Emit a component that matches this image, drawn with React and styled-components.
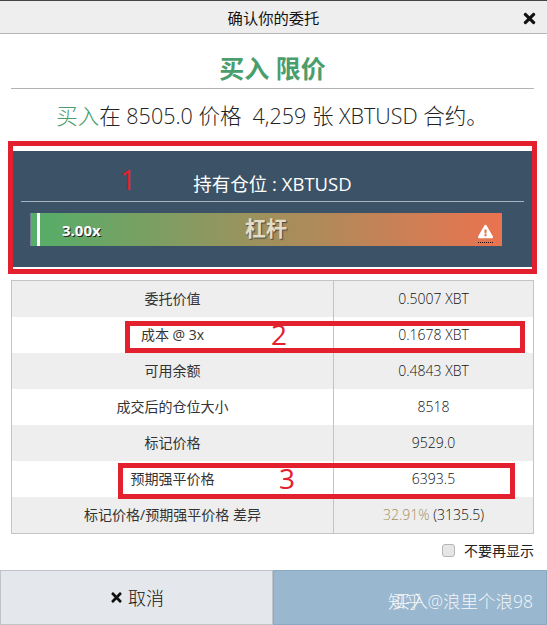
import React from "react";
import styled, { createGlobalStyle } from "styled-components";
import { FaTimes, FaExclamationTriangle } from "react-icons/fa";

const FONT = `"Open Sans", "Noto Sans CJK SC", sans-serif`;

const Global = createGlobalStyle`
  html, body { margin: 0; padding: 0; background: #fff; }
  body { font-family: ${FONT}; color: #333; }
  * { box-sizing: border-box; }
`;

const Modal = styled.div`
  position: relative;
  width: 547px;
  height: 625px;
  overflow: hidden;
  background: #fff;
  display: flex;
  flex-direction: column;
  border-top: 1px solid #444;
`;
const Header = styled.header`
  height: 33px;
  flex: none;
  background: #eee;
  border-bottom: 1px solid #b5b5b5;
  display: flex;
  align-items: center;
  justify-content: center;
  position: relative;
  font-size: 15.3px;
  color: #111;
`;
const Close = styled.span`
  position: absolute;
  right: 9px;
  top: 9px;
  line-height: 0;
  color: #111;
  font-size: 17px;
`;
const Body = styled.main`
  flex: 1;
  padding: 0 13px 0 11px;
  display: flex;
  flex-direction: column;
`;
const Title = styled.h1`
  margin: 0;
  height: 55px;
  display: flex;
  align-items: flex-end;
  justify-content: center;
  padding-bottom: 3px;
  font-size: 25px;
  font-weight: 700;
  line-height: 34px;
  color: #4a9d6c;
  border-bottom: 1px solid #b3b3b3;
`;
const Summary = styled.p`
  margin: 0;
  height: 51px;
  padding: 11px 1px 0 0;
  text-align: center;
  font-size: 21.5px;
  line-height: 32px;
  font-weight: 300;
  color: #222;
  white-space: pre;
`;
const Buy = styled.span`
  color: #4a9d6c;
`;
const Panel = styled.section`
  margin: 11px 2px 0;
  height: 116px;
  background: #3c5266;
  padding: 0 8px;
`;
const PanelTitle = styled.div`
  height: 51px;
  border-bottom: 1px solid #a3b3c2;
  display: flex;
  align-items: flex-end;
  justify-content: center;
  padding-bottom: 4px;
  color: #fff;
  font-size: 18.5px;
  line-height: 26px;
`;
const Gauge = styled.div`
  position: relative;
  margin: 11px 22px 0 9px;
  height: 33px;
  background: linear-gradient(to right, #55ae69, #ea7350);
  border-left: 1px solid #708090;
  display: flex;
  align-items: center;
`;
const Marker = styled.span`
  margin-left: 6px;
  width: 3px;
  height: 33px;
  background: #fff;
  flex: none;
`;
const Value = styled.span`
  margin-left: 22px;
  font-size: 15px;
  font-weight: 700;
  color: #fff;
  text-shadow: 1px 1px 0 #222;
`;
const GaugeLabel = styled.span`
  position: absolute;
  left: 214px;
  top: 0;
  line-height: 30px;
  font-size: 21px;
  font-weight: 700;
  color: #e4dcc4;
  text-shadow: 1px 1px 1px #444;
`;
const Warning = styled.span`
  position: absolute;
  right: 9px;
  top: 11px;
  color: #fff;
  font-size: 15px;
  line-height: 0;
  padding-bottom: 3px;
  border-bottom: 1px dotted #111;
`;
const Table = styled.div`
  margin-top: 13px;
  border: 1px solid #c4c4c4;
  display: grid;
  grid-template-columns: 321px 1fr;
`;
const Cell = styled.div`
  height: 36px;
  padding-bottom: 2px;
  display: flex;
  align-items: center;
  justify-content: center;
  font-size: 14px;
  font-weight: ${(p) => (p.$value ? 300 : 400)};
  color: ${(p) => (p.$value ? "#111" : "#333")};
  background: ${(p) => (p.$shaded ? "#eee" : "#fff")};
  border-left: ${(p) => (p.$value ? "1px solid #c4c4c4" : "0")};
  white-space: pre;
`;
const Percent = styled.span`
  color: #a68f5e;
`;
const Option = styled.label`
  height: 32px;
  display: flex;
  align-items: center;
  justify-content: flex-end;
  gap: 9px;
  font-size: 14px;
  color: #222;
`;
const Check = styled.span`
  width: 13px;
  height: 13px;
  border: 1px solid #b5b5b5;
  border-radius: 3px;
  background: #e6e6e6;
`;
const Footer = styled.footer`
  flex: none;
  height: 55px;
  display: grid;
  grid-template-columns: 273px 1fr;
`;
const ActionButton = styled.button`
  border: 1px solid ${(p) => (p.$primary ? "#8ba9c2" : "#c0c4c8")};
  background: ${(p) => (p.$primary ? "#99b7cf" : "#e4e7eb")};
  color: ${(p) => (p.$primary ? "#fff" : "#111")};
  font: 300 18px/1 ${FONT};
  display: flex;
  align-items: center;
  justify-content: center;
  gap: 4px;
  padding: 0;
`;
const Watermark = styled.span`
  position: absolute;
  right: ${(p) => p.$right}px;
  bottom: 12px;
  font-size: ${(p) => p.$size}px;
  line-height: 24px;
  font-weight: 300;
  color: rgba(255, 255, 255, 0.9);
  white-space: pre;
`;
const Callout = styled.div`
  position: absolute;
  left: ${(p) => p.$x}px;
  top: ${(p) => p.$y}px;
  width: ${(p) => p.$w}px;
  height: ${(p) => p.$h}px;
  border: 5px solid #e3202e;
`;
const CalloutNumber = styled.span`
  position: absolute;
  left: ${(p) => p.$x}px;
  top: ${(p) => p.$y}px;
  font-size: 28px;
  line-height: 32px;
  font-weight: 400;
  color: #e3202e;
`;

const rows = [
  ["委托价值", "0.5007 XBT"],
  ["成本 @ 3x", "0.1678 XBT"],
  ["可用余额", "0.4843 XBT"],
  ["成交后的仓位大小", "8518"],
  ["标记价格", "9529.0"],
  ["预期强平价格", "6393.5"],
  ["标记价格/预期强平价格 差异", <><Percent>32.91%</Percent> (3135.5)</>],
];

export default function App() {
  return (
    <Modal>
      <Global />
      <Header>
        确认你的委托
        <Close><FaTimes /></Close>
      </Header>
      <Body>
        <Title>买入 限价</Title>
        <Summary><Buy>买入</Buy>在 8505.0 价格  4,259 张 XBTUSD 合约。</Summary>
        <Panel>
          <PanelTitle>持有仓位 : XBTUSD</PanelTitle>
          <Gauge>
            <Marker />
            <Value>3.00x</Value>
            <GaugeLabel>杠杆</GaugeLabel>
            <Warning><FaExclamationTriangle /></Warning>
          </Gauge>
        </Panel>
        <Table>
          {rows.map(([label, value], i) => (
            <React.Fragment key={i}>
              <Cell $shaded={i % 2 === 0}>{label}</Cell>
              <Cell $shaded={i % 2 === 0} $value>{value}</Cell>
            </React.Fragment>
          ))}
        </Table>
        <Option><Check />不要再显示</Option>
      </Body>
      <Footer>
        <ActionButton><FaTimes size={15} />取消</ActionButton>
        <ActionButton $primary />
      </Footer>
      <Watermark $right={119} $size={18}>买入</Watermark>
      <Watermark $right={14} $size={17.5}>知乎 @浪里个浪98</Watermark>
      <Callout $x={8} $y={140} $w={529} $h={133} />
      <CalloutNumber $x={120} $y={162}>1</CalloutNumber>
      <Callout $x={125} $y={320} $w={400} $h={32} />
      <CalloutNumber $x={271} $y={317}>2</CalloutNumber>
      <Callout $x={118} $y={462} $w={397} $h={36} />
      <CalloutNumber $x={279} $y={461}>3</CalloutNumber>
    </Modal>
  );
}
